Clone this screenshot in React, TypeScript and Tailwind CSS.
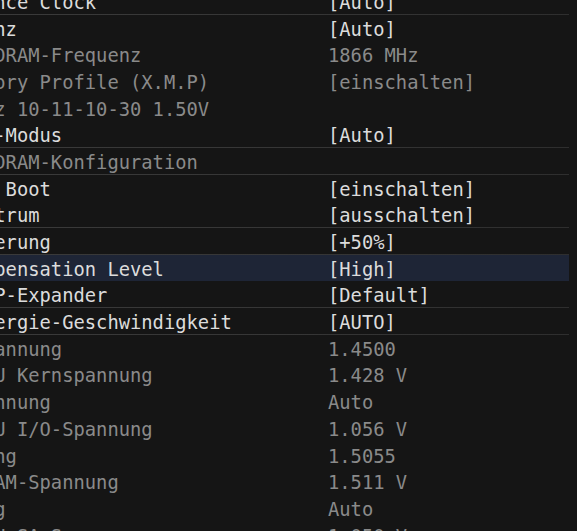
type Row = {
  label: string
  value?: string
  active?: boolean
  divider?: boolean
  selected?: boolean
}

// OC menu rows; labels are cut by the left edge of the view, so only their tails are listed
const rows: Row[] = [
  { label: "nce Clock", value: "[Auto]", active: true, divider: true },
  { label: "nz", value: "[Auto]", active: true, divider: true },
  { label: "DRAM-Frequenz", value: "1866 MHz" },
  { label: "ory Profile (X.M.P)", value: "[einschalten]" },
  { label: "z 10-11-10-30 1.50V" },
  { label: "-Modus", value: "[Auto]", active: true, divider: true },
  { label: "DRAM-Konfiguration", divider: true },
  { label: " Boot", value: "[einschalten]", active: true, divider: true },
  { label: "trum", value: "[ausschalten]", active: true, divider: true },
  { label: "erung", value: "[+50%]", active: true, divider: true },
  { label: "pensation Level", value: "[High]", active: true, divider: true, selected: true },
  { label: "P-Expander", value: "[Default]", active: true, divider: true },
  { label: "ergie-Geschwindigkeit", value: "[AUTO]", active: true, divider: true },
  { label: "annung", value: "1.4500" },
  { label: "U Kernspannung", value: "1.428 V" },
  { label: "nnung", value: "Auto" },
  { label: "U I/O-Spannung", value: "1.056 V" },
  { label: "ng", value: "1.5055" },
  { label: "AM-Spannung", value: "1.511 V" },
  { label: "g", value: "Auto" },
  { label: "U SA-Spannung", value: "1.050 V" },
]

function SettingRow({ row }: { row: Row }) {
  const color = row.active ? "text-[#dcdcdc]" : "text-[#8a8a8a]"
  return (
    <div className="h-[26.7px] w-[576px] flex flex-col">
      <div
        className={`flex-1 w-[575px] flex items-start pt-[4px] leading-[22px] ${color} ${
          row.selected ? "bg-[#1e2536]" : ""
        }`}
      >
        <span className="w-[333.7px] shrink-0 whitespace-pre">{row.label}</span>
        <span className="whitespace-pre">{row.value ?? ""}</span>
      </div>
      {row.divider ? (
        <div className="h-[2px] w-[575px] bg-gradient-to-r from-[#3a3a3a] via-[#363636] to-[#2e2e2e]" />
      ) : null}
    </div>
  )
}

export default function App() {
  return (
    <div className="w-[577px] h-[531px] overflow-hidden bg-[#151515]">
      <div
        className="-mt-[12.2px] -ml-[5.7px] text-[18.8px]"
        style={{ fontFamily: '"DejaVu Sans Mono", "Liberation Mono", monospace' }}
      >
        {rows.map((row, i) => (
          <SettingRow key={i} row={row} />
        ))}
      </div>
    </div>
  )
}
